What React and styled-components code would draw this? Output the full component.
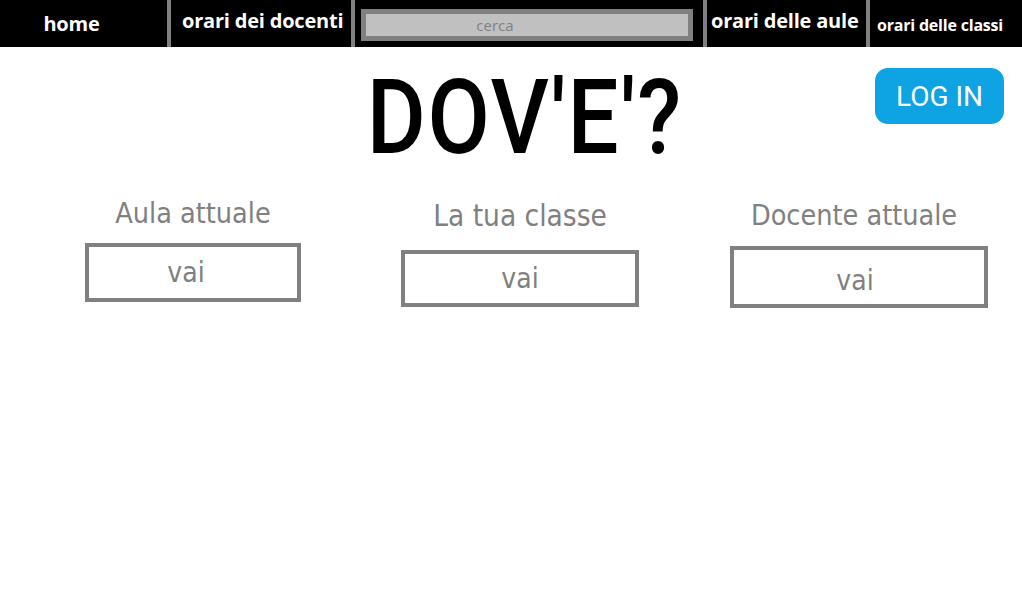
import React from 'react';
import styled, { createGlobalStyle } from 'styled-components';

const GlobalStyles = createGlobalStyle`
    html, body {
        margin: 0;
        padding: 0;
        background: #ffffff;
    }
    body {
        width: 1022px;
        height: 601px;
        overflow: hidden;
        font-family: "DejaVu Sans Condensed", "DejaVu Sans", sans-serif;
    }
`;

const Page = styled.div`
    display: flex;
    flex-direction: column;
    width: 1022px;
    height: 601px;
`;

/* barra di navigazione in alto */
const NavBar = styled.nav`
    display: flex;
    height: 47px;
    background: #000000;
`;

const NavItem = styled.div`
    display: flex;
    align-items: ${(p) => (p.$center ? 'center' : 'flex-start')};
    justify-content: ${(p) => (p.$center ? 'center' : 'flex-start')};
    width: ${(p) => p.$w}px;
    padding-left: ${(p) => p.$pl || 0}px;
    padding-right: ${(p) => p.$pr || 0}px;
    padding-top: ${(p) => p.$pt || 0}px;
    box-sizing: border-box;
    color: #ffffff;
    font-family: "Open Sans", "Noto Sans", sans-serif;
    font-weight: 700;
    font-size: ${(p) => p.$size}px;
    white-space: nowrap;
    letter-spacing: -0.2px;
`;

const Separator = styled.div`
    width: 4px;
    height: 47px;
    background: #808080;
    flex-shrink: 0;
`;

const SearchCell = styled.div`
    display: flex;
    align-items: flex-start;
    width: 348px;
    padding: 9px 0 0 6px;
    box-sizing: border-box;
`;

const SearchBox = styled.div`
    width: 332px;
    height: 32px;
    box-sizing: border-box;
    border: 5px solid #808080;
    background: #c0c0c0;
    color: #808080;
    font-family: "Open Sans", "Noto Sans", sans-serif;
    font-size: 15px;
    line-height: 22px;
    text-align: center;
    padding-right: 64px;
`;

/* intestazione con titolo e pulsante */
const Header = styled.header`
    display: grid;
    grid-template-columns: 1fr auto 1fr;
    align-items: start;
    height: 150px;
`;

const Title = styled.h1`
    grid-column: 2;
    margin: 15px 0 0 28px;
    font-family: Roboto, "DejaVu Sans Condensed", sans-serif;
    font-weight: 500;
    font-size: 104px;
    line-height: 112px;
    letter-spacing: 2px;
    color: #000000;
    transform: scaleX(0.87);
    transform-origin: center;
`;

const LoginButton = styled.button`
    grid-column: 3;
    justify-self: end;
    margin: 21px 18px 0 0;
    width: 129px;
    height: 56px;
    border: none;
    border-radius: 13px;
    background: #0ea3e2;
    color: #ffffff;
    font-family: Roboto, "DejaVu Sans Condensed", sans-serif;
    font-weight: 400;
    font-size: 28px;
    padding: 0;
    cursor: pointer;
`;

/* le tre sezioni */
const Sections = styled.section`
    display: flex;
    align-items: flex-start;
`;

const Column = styled.div`
    display: flex;
    flex-direction: column;
    align-items: center;
    width: ${(p) => p.$w}px;
    margin-left: ${(p) => p.$ml}px;
`;

const Label = styled.div`
    margin-top: ${(p) => p.$mt}px;
    margin-right: ${(p) => p.$shift || 0}px;
    color: #808080;
    font-size: ${(p) => p.$size}px;
    line-height: 32px;
    white-space: nowrap;
`;

const GoBox = styled.button`
    margin-top: ${(p) => p.$gap}px;
    width: 100%;
    height: ${(p) => p.$h}px;
    box-sizing: border-box;
    border: 4px solid #808080;
    background: #ffffff;
    color: #808080;
    font-family: "DejaVu Sans Condensed", "DejaVu Sans", sans-serif;
    font-size: 28px;
    padding: ${(p) => p.$pt || 0}px ${(p) => p.$pr || 0}px 0 0;
    cursor: pointer;
`;

const columns = [
    { label: 'Aula attuale', size: 28.5, w: 216, ml: 85, mt: 1, gap: 13, h: 59, pr: 14 },
    { label: 'La tua classe', size: 29.5, w: 238, ml: 100, mt: 3, gap: 18, h: 57 },
    { label: 'Docente attuale', size: 28.5, w: 258, ml: 91, mt: 3, gap: 14, h: 62, shift: 10, pr: 8, pt: 6 },
];

export default function App() {
    return (
        <Page>
            <GlobalStyles />
            <NavBar>
                <NavItem $w={167} $size={20} $pr={24} $center>home</NavItem>
                <Separator />
                <NavItem $w={180} $size={20} $pl={11} $pt={7}>orari dei docenti</NavItem>
                <Separator />
                <SearchCell>
                    <SearchBox>cerca</SearchBox>
                </SearchCell>
                <Separator />
                <NavItem $w={159} $size={20} $pl={4} $pt={7}>orari delle aule</NavItem>
                <Separator />
                <NavItem $w={152} $size={16} $pl={7} $pt={14}>orari delle classi</NavItem>
            </NavBar>
            <Header>
                <Title>DOV'E'?</Title>
                <LoginButton>LOG IN</LoginButton>
            </Header>
            <Sections>
                {columns.map((c) => (
                    <Column key={c.label} $w={c.w} $ml={c.ml}>
                        <Label $mt={c.mt} $size={c.size} $shift={c.shift}>{c.label}</Label>
                        <GoBox $gap={c.gap} $h={c.h} $pr={c.pr} $pt={c.pt}>vai</GoBox>
                    </Column>
                ))}
            </Sections>
        </Page>
    );
}
